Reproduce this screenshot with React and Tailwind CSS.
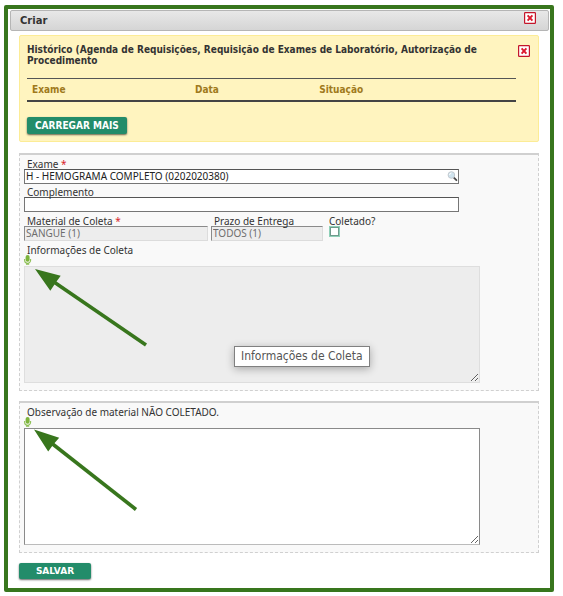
import { useState } from "react";

const CloseIcon = () => (
  <svg viewBox="0 0 12 12" className="block w-3 h-3" aria-hidden="true">
    <rect x="0.6" y="0.6" width="10.8" height="10.8" rx="0.6" fill="#fff" stroke="#c4162b" strokeWidth="1.2" />
    <path d="M3.6 3.3 8.4 8.7M8.4 3.3 3.6 8.7" stroke="#dc1a2e" strokeWidth="1.9" />
  </svg>
);

const MicIcon = () => (
  <svg viewBox="0 0 8 11" className="block w-2 h-[11px]" aria-hidden="true">
    <rect x="1.6" y="0" width="4" height="6.8" rx="2" fill="#7db43c" />
    <path d="M0.6 4v1.3a3 3 0 0 0 6 0V4" fill="none" stroke="#8fc158" strokeWidth="1.1" />
    <path d="M3.6 8v1.2M2 9h3.2" stroke="#8bbd50" strokeWidth="1.3" />
  </svg>
);

const SearchIcon = () => (
  <svg viewBox="0 0 11 11" className="block w-[11px] h-[11px]" aria-hidden="true">
    <path d="M6.6 6.4 9.4 9.2" stroke="#4a4a4a" strokeWidth="1.8" strokeLinecap="round" />
    <circle cx="4.4" cy="4" r="3.3" fill="#cfe3ee" stroke="#c3cad0" strokeWidth="1" />
    <path d="M2.6 4a2 2 0 0 1 1.8-2" fill="none" stroke="#fff" strokeWidth="1" />
  </svg>
);

const Required = () => <span className="text-[#d8232a]">*</span>;

const Label = ({ htmlFor, children }) => (
  <label htmlFor={htmlFor} className="block w-fit pl-[3px] pt-[3px] h-[13px] leading-[11px] whitespace-nowrap">
    {children}
  </label>
);

const MicButton = ({ label }) => (
  <button type="button" aria-label={label} className="block">
    <MicIcon />
  </button>
);

const fieldClass =
  "block w-full h-[15px] px-px text-[10px] leading-[13px] text-[#222] bg-white border border-[#767676] border-t-[#555] rounded-none outline-none";
const disabledClass =
  "block w-full h-[15px] px-px text-[10px] leading-[13px] text-[#6d6d6d] bg-[#ededed] border border-t-[#8a8a8a] border-l-[#8a8a8a] border-r-[#dcdcdc] border-b-[#dcdcdc] rounded-none";
const buttonClass =
  "block bg-[#238c6a] text-white font-bold rounded-xs shadow-[0_1px_2px_rgba(0,0,0,0.6)]";
const panelClass =
  "bg-[#f9f9f9] border border-dashed border-[#d0d0d0] border-t-2 [border-top-style:solid] px-1 pt-px pb-[7px]";

const Arrow = ({ points, x1, y1, x2, y2 }) => (
  <>
    <polygon points={points} fill="#38761d" />
    <line x1={x1} y1={y1} x2={x2} y2={y2} stroke="#38761d" strokeWidth="3.6" />
  </>
);

const App = () => {
  const [form, setForm] = useState({
    exame: "H - HEMOGRAMA COMPLETO (0202020380)",
    complemento: "",
    coletado: false,
    observacao: "",
  });

  const handleChange = (e) => {
    const { name, type, checked, value } = e.target;
    setForm({ ...form, [name]: type === "checkbox" ? checked : value });
  };

  return (
    <div className="bg-white pt-[5px] pl-1 pr-[9px] pb-1 font-['Noto_Sans',sans-serif] text-[10px] text-[#333]">
      <main className="border-4 border-[#38761d] rounded-xs pl-[2px] pr-px pt-px pb-[9px]">
        <header className="flex justify-between h-[21px] pl-[9px] pr-3 bg-linear-to-b from-[#e8e8e8] to-[#d5d5d5] border border-[#b5b5b5] rounded-xs font-['DejaVu_Sans',sans-serif]">
          <h1 className="font-bold text-[10px] leading-[19px] text-[#333]">Criar</h1>
          <button type="button" aria-label="Fechar" className="self-start pt-px">
            <CloseIcon />
          </button>
        </header>

        <form onSubmit={(e) => e.preventDefault()} className="pl-[9px] pr-[10px] pt-1">
          <section className="bg-[#fff4bf] border border-[#fcec96] rounded-xs pl-[7px] pr-2 pt-2 pb-[7px] font-['DejaVu_Sans_Condensed','DejaVu_Sans',sans-serif]">
            <div className="flex justify-between items-start">
              <h2 className="max-w-[470px] font-bold text-[10px] leading-[11px] text-[#333]">
                Histórico (Agenda de Requisições, Requisição de Exames de Laboratório, Autorização de Procedimento
              </h2>
              <button type="button" aria-label="Fechar histórico" className="pt-px">
                <CloseIcon />
              </button>
            </div>
            <div className="pr-[14px] pt-3">
              <table className="w-full table-fixed border-collapse">
                <thead>
                  <tr className="h-[22px] border-t border-t-[#555] border-b-2 border-b-[#444] text-left text-[#a07a1c]">
                    <th className="w-1/3 pl-[5px]">Exame</th>
                    <th className="w-1/4 pl-[5px]">Data</th>
                    <th className="pl-[7px]">Situação</th>
                  </tr>
                </thead>
              </table>
            </div>
            <button type="button" className={`${buttonClass} mt-[15px] px-2 h-[17px] leading-[17px] text-[10px]`}>
              CARREGAR MAIS
            </button>
          </section>

          <section className={`${panelClass} mt-[11px]`}>
            <div className="max-w-[435px]">
              <Label htmlFor="exame">
                Exame <Required />
              </Label>
              <div className="relative">
                <input id="exame" name="exame" value={form.exame} onChange={handleChange} className={fieldClass} />
                <button type="button" aria-label="Pesquisar exame" className="absolute right-px top-[2px]">
                  <SearchIcon />
                </button>
              </div>
              <Label htmlFor="complemento">Complemento</Label>
              <input
                id="complemento"
                name="complemento"
                value={form.complemento}
                onChange={handleChange}
                className={fieldClass}
              />
            </div>
            <div className="flex gap-[3px] pt-px">
              <div className="w-[184px]">
                <Label htmlFor="material">
                  Material de Coleta <Required />
                </Label>
                <input id="material" disabled value="SANGUE (1)" className={disabledClass} />
              </div>
              <div className="w-[112px]">
                <Label htmlFor="prazo">Prazo de Entrega</Label>
                <input id="prazo" disabled value="TODOS (1)" className={disabledClass} />
              </div>
              <div>
                <Label htmlFor="coletado">Coletado?</Label>
                <input
                  id="coletado"
                  name="coletado"
                  type="checkbox"
                  checked={form.coletado}
                  onChange={handleChange}
                  className="block appearance-none w-[9px] h-[9px] ml-1 mt-px bg-white border border-[#6f9a8c] outline-1 outline-[#8fd0b8] checked:bg-[#238c6a]"
                />
              </div>
            </div>
            <div className="pt-px max-w-[456px]">
              <Label htmlFor="informacoes">Informações de Coleta</Label>
              <MicButton label="Ditar informações de coleta" />
              <div className="relative">
                <textarea
                  id="informacoes"
                  disabled
                  className="block w-full h-[117px] p-px bg-[#ededed] border border-[#dedede] rounded-none resize"
                />
                <div
                  role="tooltip"
                  className="absolute left-[210px] top-20 px-[6px] h-[21px] leading-[19px] bg-white border border-[#808080] shadow-[0_2px_8px_rgba(0,0,0,0.3)] font-['DejaVu_Sans_Condensed','DejaVu_Sans',sans-serif] text-[12px] text-[#555] whitespace-nowrap"
                >
                  Informações de Coleta
                </div>
              </div>
            </div>
          </section>

          <section className={`${panelClass} mt-[10px]`}>
            <div className="max-w-[456px]">
              <Label htmlFor="observacao">Observação de material NÃO COLETADO.</Label>
              <MicButton label="Ditar observação" />
              <textarea
                id="observacao"
                name="observacao"
                value={form.observacao}
                onChange={handleChange}
                className="block w-full h-[117px] p-px bg-white border border-[#8a8a8a] border-b-[#bbb] rounded-none outline-none resize"
              />
            </div>
          </section>

          <button
            type="submit"
            className={`${buttonClass} mt-[10px] w-[72px] h-4 leading-4 text-[9px] font-['DejaVu_Sans',sans-serif]`}
          >
            SALVAR
          </button>
        </form>
      </main>

      <svg className="absolute left-0 top-0 pointer-events-none" width="200" height="540" aria-hidden="true">
        <Arrow points="35,269 60.7,275.7 56,282.3 50.3,290.7" x1="54" y1="282" x2="146" y2="345" />
        <Arrow points="34,429.5 59.2,437.7 53.5,444.2 48.2,451.5" x1="52" y1="443.5" x2="136" y2="509.5" />
      </svg>
    </div>
  );
};

export default App;
